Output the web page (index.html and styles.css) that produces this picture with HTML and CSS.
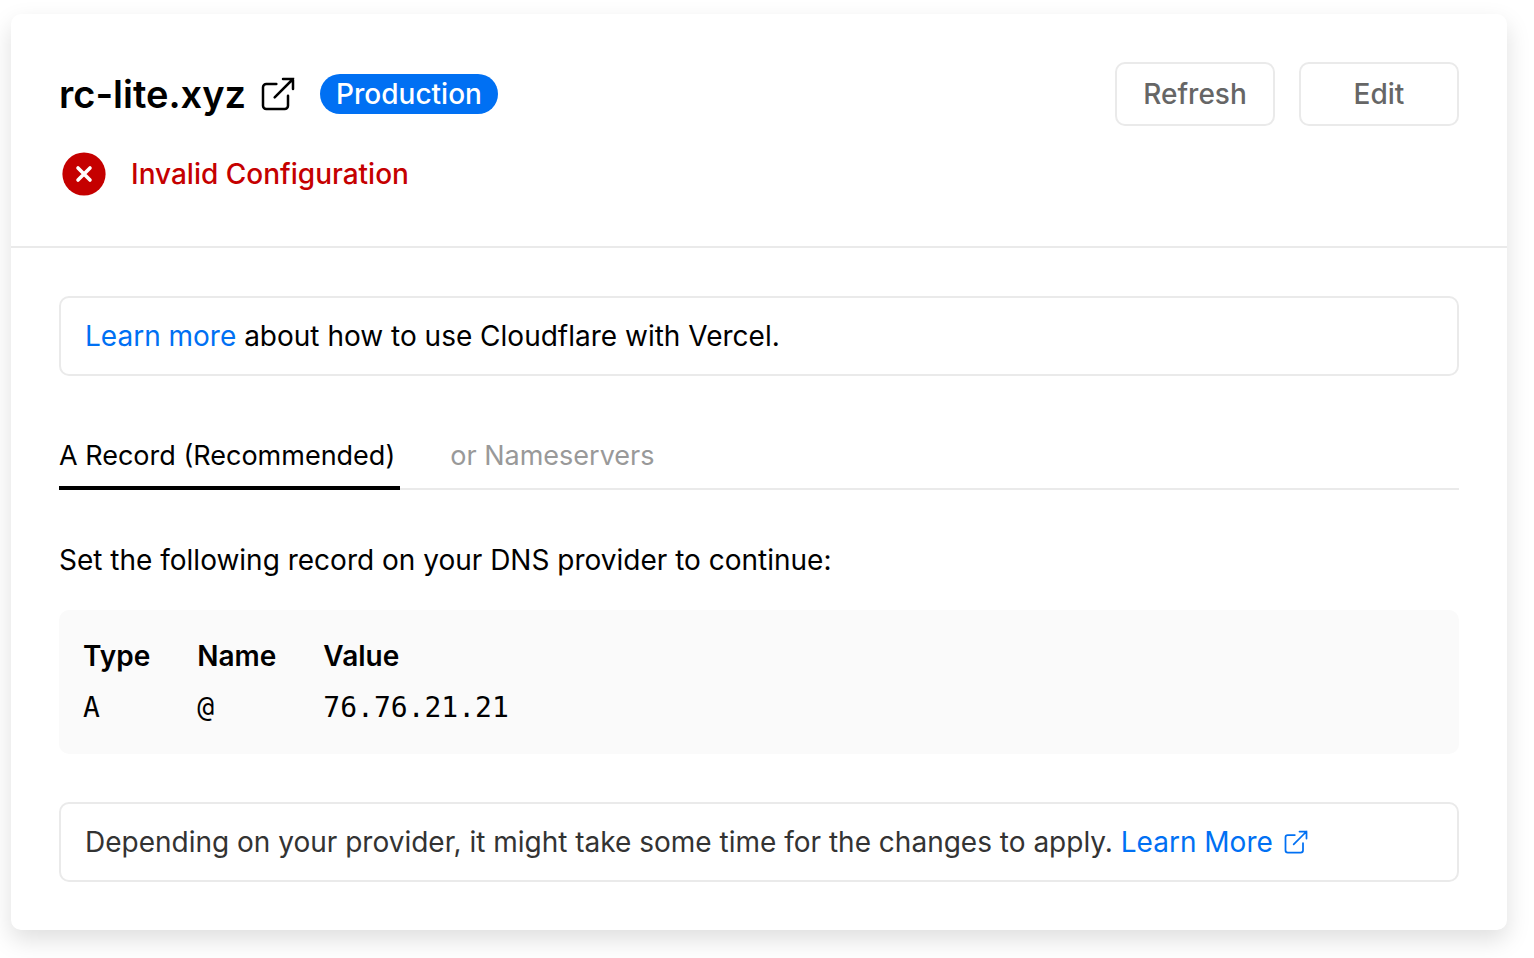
FILE: index.html
```html
<!DOCTYPE html>
<html lang="en">
<head>
<meta charset="utf-8">
<title>rc-lite.xyz</title>
<link rel="stylesheet" href="styles.css">
</head>
<body>
<main class="card">
  <header class="head">
    <div class="title-row">
      <h1 class="domain">rc-lite.xyz</h1>
      <a class="open" href="#" aria-label="Open rc-lite.xyz"><svg class="icon-lg" viewBox="0 0 24 24"><path d="M18 13v6a2 2 0 0 1-2 2H5a2 2 0 0 1-2-2V8a2 2 0 0 1 2-2h6M15 3h6v6M10 14L21 3"/></svg></a>
      <span class="badge">Production</span>
      <div class="actions">
        <button class="btn" type="button">Refresh</button>
        <button class="btn" type="button">Edit</button>
      </div>
    </div>
    <div class="status">
      <svg class="icon-status" viewBox="0 0 24 24"><circle cx="12" cy="12" r="10.8"/><path d="M15 9l-6 6M9 9l6 6"/></svg>
      <span>Invalid Configuration</span>
    </div>
  </header>
  <section class="body">
    <p class="note"><a class="link" href="#">Learn more</a> about how to use Cloudflare with Vercel.</p>
    <div class="tabs" role="tablist">
      <button class="tab active" type="button" role="tab" aria-selected="true">A Record (Recommended)</button>
      <button class="tab" type="button" role="tab" aria-selected="false">or Nameservers</button>
    </div>
    <p class="intro">Set the following record on your DNS provider to continue:</p>
    <div class="record">
      <table class="dns">
        <thead><tr><th>Type</th><th>Name</th><th>Value</th></tr></thead>
        <tbody><tr><td>A</td><td>@</td><td>76.76.21.21</td></tr></tbody>
      </table>
    </div>
    <p class="note muted">Depending on your provider, it might take some time for the changes to apply. <a class="link" href="#">Learn More <svg class="icon-sm" viewBox="0 0 24 24"><path d="M18 13v6a2 2 0 0 1-2 2H5a2 2 0 0 1-2-2V8a2 2 0 0 1 2-2h6M15 3h6v6M10 14L21 3"/></svg></a></p>
  </section>
</main>
</body>
</html>
```
FILE: styles.css
```css
* { box-sizing: border-box; }
body { margin: 0; padding: 14px 27px 28px 11px; background: #fff; color: #000; font: 28px/40px Inter, sans-serif; }
h1, p { margin: 0; }
svg { fill: none; stroke: currentColor; stroke-width: 1.5; stroke-linecap: round; stroke-linejoin: miter; }
.card { border-radius: 10px; background: #fff; box-shadow: 0 10px 24px rgba(0, 0, 0, 0.13); }
.head { padding: 48px; border-bottom: 2px solid #eaeaea; }
.title-row { display: flex; align-items: center; }
.domain { font-size: 38px; font-weight: 600; line-height: 64px; }
.open { display: flex; margin: 0 22px 0 12px; color: #000; }
.icon-lg { width: 40px; height: 40px; }
.badge { padding: 0 16px; border-radius: 20px; background: #0070f3; color: #fff; font-weight: 500; }
.actions { display: flex; gap: 24px; margin-left: auto; }
.btn { width: 160px; height: 64px; padding: 0; border: 2px solid #eaeaea; border-radius: 10px; background: #fff; color: #666; font: 500 28px/40px Inter, sans-serif; }
.status { display: flex; align-items: center; gap: 22px; margin-top: 24px; color: #c50000; font-weight: 500; }
.icon-status { width: 50px; height: 48px; }
.icon-status circle { fill: #c50000; stroke: none; }
.icon-status path { stroke: #fff; stroke-width: 1.8; }
.body { padding: 48px; }
.note { padding: 18px 24px; border: 2px solid #eaeaea; border-radius: 10px; }
.muted { color: #333; }
.link { color: #0070f3; text-decoration: none; }
.tabs { display: flex; gap: 50px; margin-top: 48px; box-shadow: inset 0 -2px #eaeaea; }
.tab { padding: 12px 5px 10px 0; border: 0; border-bottom: 4px solid transparent; background: none; color: #999; font: 27px/40px Inter, sans-serif; }
.active { border-color: #000; color: #000; }
.intro { margin-top: 50px; }
.record { margin-top: 30px; padding: 20px 24px; border-radius: 10px; background: #fafafa; }
.dns { border-collapse: collapse; text-align: left; }
.dns th, .dns td { padding: 0 47px 0 0; height: 52px; }
.dns th { font-weight: 600; }
.dns td { font-family: "DejaVu Sans Mono", monospace; }
.record + .note { margin-top: 48px; }
.icon-sm { width: 28px; height: 28px; margin-left: 1px; vertical-align: -4px; }
```
